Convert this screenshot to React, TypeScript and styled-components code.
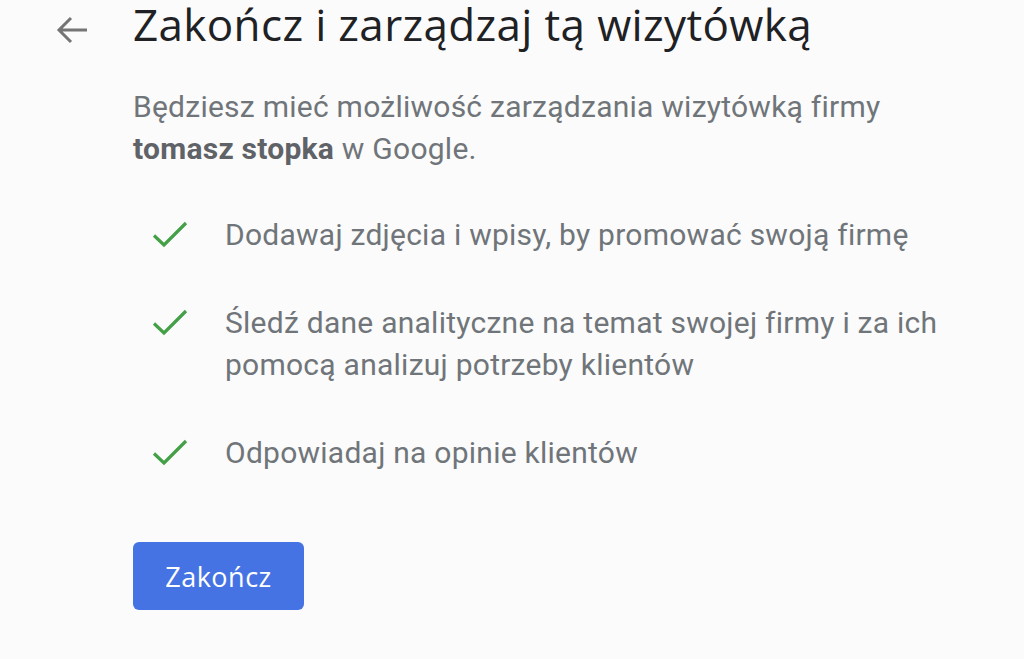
import React from "react";
import styled, { createGlobalStyle } from "styled-components";

const Global = createGlobalStyle`
  html, body { margin: 0; padding: 0; background: #fbfbfb; }
  body { font-family: Roboto, "Noto Sans", sans-serif; }
`;

const Page = styled.div`
  width: 1024px;
  height: 659px;
  overflow: hidden;
  background: #fbfbfb;
`;

const Header = styled.header`
  display: flex;
  align-items: flex-start;
  padding: 0 0 0 52px;
`;

const BackButton = styled.button`
  width: 40px;
  height: 40px;
  border: none;
  background: none;
  padding: 0;
  margin: 10px 41px 0 0;
  display: flex;
  align-items: center;
  justify-content: center;
  color: #757575;
  cursor: pointer;
`;

const Title = styled.h1`
  margin: 0;
  padding-top: 3px;
  font-family: "Open Sans", sans-serif;
  font-weight: 400;
  font-size: 44px;
  line-height: 54px;
  height: 54px;
  color: #202124;
  letter-spacing: 0.35px;
  white-space: nowrap;
  box-sizing: border-box;
  display: flex;
  align-items: flex-end;
`;

const TitleText = styled.span`
  display: block;
  line-height: 60px;
  margin-bottom: 0;
`;

const Content = styled.main`
  padding: 32px 0 0 133px;
`;

const Lead = styled.p`
  margin: 0;
  font-size: 30px;
  line-height: 42px;
  letter-spacing: 0.25px;
  color: #70757a;
  max-width: 780px;
  strong { font-weight: 700; color: #5f6368; }
`;

const List = styled.ul`
  list-style: none;
  margin: 44px 0 0 0;
  padding: 0;
  display: flex;
  flex-direction: column;
  gap: 46px;
`;

const Item = styled.li`
  display: flex;
  align-items: flex-start;
  padding-left: 18px;
`;

const Check = styled.span`
  width: 38px;
  height: 42px;
  flex: none;
  margin-right: 36px;
  display: flex;
  align-items: center;
  justify-content: center;
`;

const ItemText = styled.span`
  font-size: 30px;
  line-height: 42px;
  letter-spacing: 0.25px;
  color: #70757a;
  max-width: 745px;
`;

const Primary = styled.button`
  margin-top: 68px;
  width: 171px;
  height: 68px;
  border: none;
  border-radius: 6px;
  background: #4673e3;
  color: #fff;
  font-family: "Open Sans", sans-serif;
  font-weight: 500;
  font-size: 27px;
  letter-spacing: 0.5px;
  cursor: pointer;
`;

const CheckIcon = () => (
  <svg width="38" height="30" viewBox="0 0 38 30">
    <path d="M3 15.5 L13 25 L35 3" fill="none" stroke="#43a047" strokeWidth="3.2" />
  </svg>
);

const items = [
  "Dodawaj zdjęcia i wpisy, by promować swoją firmę",
  "Śledź dane analityczne na temat swojej firmy i za ich pomocą analizuj potrzeby klientów",
  "Odpowiadaj na opinie klientów",
];

export default function App() {
  return (
    <Page>
      <Global />
      <Header>
        <BackButton aria-label="Wstecz">
          <svg width="34" height="30" viewBox="0 0 34 30">
            <path d="M32 15 H4 M16 3 L4 15 L16 27" fill="none" stroke="#757575" strokeWidth="3" />
          </svg>
        </BackButton>
        <Title>
          <TitleText>Zakończ i zarządzaj tą wizytówką</TitleText>
        </Title>
      </Header>
      <Content>
        <Lead>
          Będziesz mieć możliwość zarządzania wizytówką firmy <strong>tomasz stopka</strong> w Google.
        </Lead>
        <List>
          {items.map((t) => (
            <Item key={t}>
              <Check>
                <CheckIcon />
              </Check>
              <ItemText>{t}</ItemText>
            </Item>
          ))}
        </List>
        <Primary>Zakończ</Primary>
      </Content>
    </Page>
  );
}
